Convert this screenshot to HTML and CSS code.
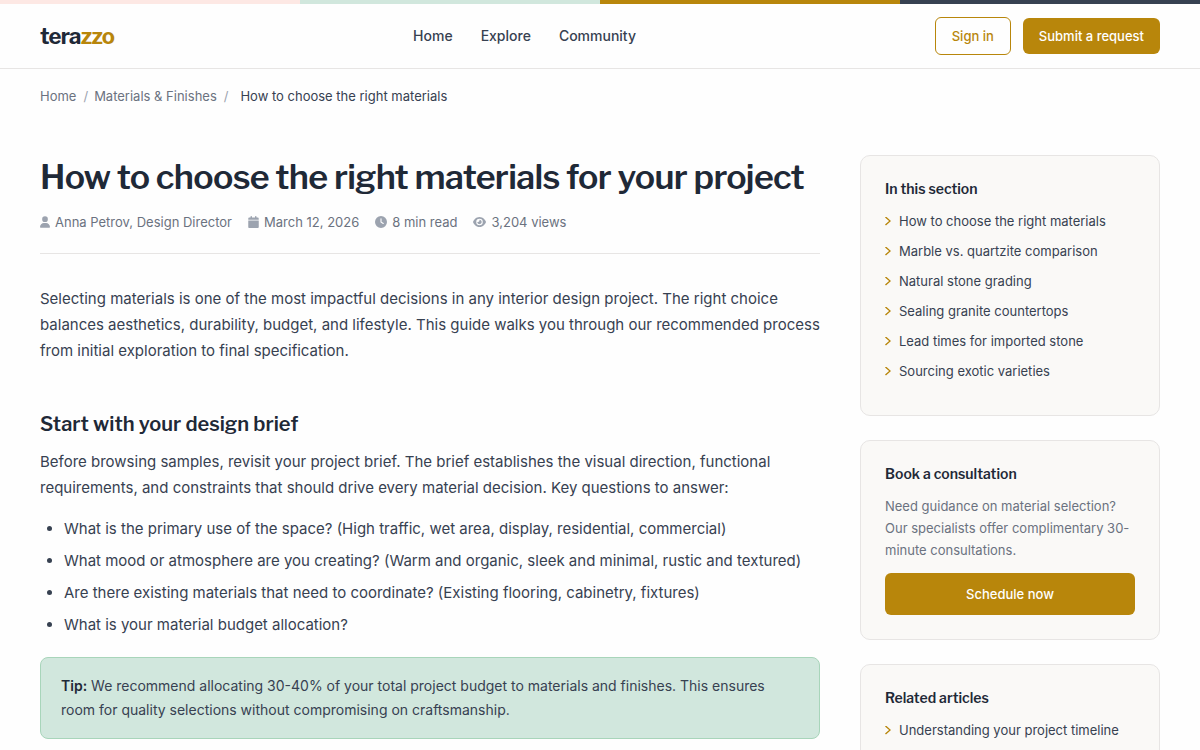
FILE: index.html
```html
<!doctype html>
<html lang="en">
<head>
  <meta charset="utf-8">
  <meta name="viewport" content="width=device-width, initial-scale=1">
  <title>How to choose the right materials for your project</title>
  <link rel="stylesheet" href="styles.css">
</head>
<body>
  <div class="stripe">
    <span class="blush"></span>
    <span class="mint"></span>
    <span class="gold"></span>
    <span class="slate"></span>
  </div>

  <header class="header">
    <a class="logo" href="#">tera<span>zzo</span></a>
    <nav class="nav">
      <a href="#">Home</a>
      <a href="#">Explore</a>
      <a href="#">Community</a>
    </nav>
    <div class="actions">
      <button class="btn btn-outline" type="button">Sign in</button>
      <button class="btn btn-primary" type="button">Submit a request</button>
    </div>
  </header>

  <nav aria-label="Breadcrumb">
    <ol class="breadcrumbs">
      <li><a href="#">Home</a></li>
      <li><a href="#">Materials &amp; Finishes</a></li>
      <li class="current">How to choose the right materials</li>
    </ol>
  </nav>

  <div class="layout">
    <main class="article">
      <h1>How to choose the right materials for your project</h1>
      <div class="meta">
        <span>
          <svg width="10" height="12" viewBox="0 0 448 512"><path d="M224 256a128 128 0 1 0 0-256 128 128 0 1 0 0 256zm-46 48C80 304 0 384 0 482c0 17 13 30 30 30h388c17 0 30-13 30-30 0-98-80-178-178-178z"/></svg>
          Anna Petrov, Design Director
        </span>
        <span>
          <svg width="11" height="12" viewBox="0 0 448 512"><path d="M96 32v32H48C22 64 0 86 0 112v48h448v-48c0-26-22-48-48-48h-48V32c0-18-14-32-32-32s-32 14-32 32v32H160V32c0-18-14-32-32-32S96 14 96 32zm352 160H0v272c0 26 22 48 48 48h352c26 0 48-22 48-48z"/></svg>
          March 12, 2026
        </span>
        <span>
          <svg width="12" height="12" viewBox="0 0 512 512"><path d="M256 0a256 256 0 1 1 0 512 256 256 0 1 1 0-512zm-24 120v136c0 8 4 15 11 20l96 64c11 7 26 4 33-7s4-26-6-33l-86-57V120c0-13-11-24-24-24s-24 11-24 24z"/></svg>
          8 min read
        </span>
        <span>
          <svg width="13" height="12" viewBox="0 0 576 512"><path d="M288 32c-81 0-146 37-193 80C49 156 18 208 3 244c-3 8-3 17 0 25 15 35 46 87 92 131 47 43 112 80 193 80s146-37 193-80c47-44 78-96 93-131 3-8 3-17 0-25-15-36-46-88-93-132-47-43-112-80-193-80zM144 256a144 144 0 1 1 288 0 144 144 0 1 1-288 0zm144-64c0 35-29 64-64 64-7 0-14-1-20-3-6-2-12 2-12 7 0 7 1 14 3 21 14 51 67 82 118 68s82-67 68-118c-11-42-48-69-89-71-5 0-9 5-7 11 2 7 3 14 3 21z"/></svg>
          3,204 views
        </span>
      </div>

      <p>Selecting materials is one of the most impactful decisions in any interior design project. The right choice balances aesthetics, durability, budget, and lifestyle. This guide walks you through our recommended process from initial exploration to final specification.</p>

      <h2>Start with your design brief</h2>
      <p>Before browsing samples, revisit your project brief. The brief establishes the visual direction, functional requirements, and constraints that should drive every material decision. Key questions to answer:</p>
      <ul>
        <li>What is the primary use of the space? (High traffic, wet area, display, residential, commercial)</li>
        <li>What mood or atmosphere are you creating? (Warm and organic, sleek and minimal, rustic and textured)</li>
        <li>Are there existing materials that need to coordinate? (Existing flooring, cabinetry, fixtures)</li>
        <li>What is your material budget allocation?</li>
      </ul>
      <div class="tip"><strong>Tip:</strong> We recommend allocating 30-40% of your total project budget to materials and finishes. This ensures room for quality selections without compromising on craftsmanship.</div>
    </main>

    <aside class="sidebar">
      <section class="card">
        <h3>In this section</h3>
        <ul class="links">
          <li><a href="#">How to choose the right materials</a></li>
          <li><a href="#">Marble vs. quartzite comparison</a></li>
          <li><a href="#">Natural stone grading</a></li>
          <li><a href="#">Sealing granite countertops</a></li>
          <li><a href="#">Lead times for imported stone</a></li>
          <li><a href="#">Sourcing exotic varieties</a></li>
        </ul>
      </section>
      <section class="card">
        <h3>Book a consultation</h3>
        <p>Need guidance on material selection? Our specialists offer complimentary 30-minute consultations.</p>
        <button class="btn btn-primary btn-block" type="button">Schedule now</button>
      </section>
      <section class="card">
        <h3>Related articles</h3>
        <ul class="links">
          <li><a href="#">Understanding your project timeline</a></li>
        </ul>
      </section>
    </aside>
  </div>
</body>
</html>
```
FILE: styles.css
```css
:root {
  --gold: #b8860b;
  --mint: #d1e7dd;
  --blush: #fde8e4;
  --slate: #374151;
  --ink: #1f2937;
  --muted: #6b7280;
  --faint: #9ca3af;
  --line: #e7e5e4;
  --panel: #faf9f7;
  --heading: "Libre Franklin", Inter, sans-serif;
}

* {
  box-sizing: border-box;
}

body {
  margin: 0;
  background: #fefefe;
  color: var(--slate);
  font: 15px/26px Inter, sans-serif;
}

a {
  color: inherit;
  text-decoration: none;
}

h1, h2, h3 {
  margin: 0;
  color: var(--ink);
  font-family: var(--heading);
  font-weight: 600;
}

/* top colour stripe */
.stripe {
  display: flex;
  height: 4px;
}
.stripe span {
  flex: 1;
}
.blush { background: var(--blush); }
.mint { background: var(--mint); }
.gold { background: var(--gold); }
.slate { background: var(--slate); }

.header {
  display: flex;
  align-items: center;
  justify-content: space-between;
  height: 65px;
  padding: 0 40px;
  border-bottom: 1px solid var(--line);
}
.logo {
  color: var(--ink);
  font: 700 22px/28px var(--heading);
  letter-spacing: -0.03em;
}
.logo span {
  color: var(--gold);
}
.nav {
  display: flex;
  gap: 28px;
  font-size: 14px;
  font-weight: 500;
}
.actions {
  display: flex;
  align-items: center;
  gap: 12px;
}

.btn {
  padding: 8px 16px;
  border: 0;
  border-radius: 6px;
  font: 500 13px/20px Inter, sans-serif;
  cursor: pointer;
}
.btn-outline {
  border: 1px solid var(--gold);
  background: transparent;
  color: var(--gold);
}
.btn-primary {
  background: var(--gold);
  color: #fff;
}
.btn-block {
  width: 100%;
  padding: 11px 16px;
}

.breadcrumbs {
  display: flex;
  margin: 0;
  padding: 16px 40px;
  list-style: none;
  color: var(--muted);
  font-size: 13px;
  line-height: 22px;
}
.breadcrumbs li:not(:last-child)::after {
  content: "/";
  margin: 0 6px 0 7px;
  color: var(--faint);
}
.breadcrumbs .current {
  margin-left: 6px;
  color: var(--slate);
}

.layout {
  display: grid;
  grid-template-columns: minmax(0, 1fr) 300px;
  gap: 40px;
  padding: 32px 40px 60px;
}

.article h1 {
  font-size: 34px;
  line-height: 44px;
  letter-spacing: -0.02em;
}
.meta {
  display: flex;
  gap: 16px;
  margin: 12px 0 32px;
  padding-bottom: 20px;
  border-bottom: 1px solid var(--line);
  color: var(--muted);
  font-size: 13px;
  line-height: 22px;
}
.meta span {
  display: flex;
  align-items: center;
  gap: 5px;
}
.meta svg {
  fill: var(--faint);
}
.article p {
  margin: 0 0 15px;
}
.article h2 {
  margin: 45px 0 10px;
  font-size: 20px;
  line-height: 30px;
}
.article ul {
  margin: 0 0 19px;
  padding-left: 24px;
}
.article li + li {
  margin-top: 6px;
}
.tip {
  padding: 16px 20px;
  border: 1px solid #a8d5ba;
  border-radius: 8px;
  background: var(--mint);
  font-size: 14px;
  line-height: 24px;
}
.tip strong {
  color: var(--ink);
  font-weight: 600;
}

.sidebar {
  display: flex;
  flex-direction: column;
  gap: 24px;
}
.card {
  padding: 24px;
  border: 1px solid var(--line);
  border-radius: 10px;
  background: var(--panel);
  font-size: 13px;
  line-height: 22px;
}
.card h3 {
  margin-bottom: 12px;
  font-size: 14px;
  line-height: 18px;
}
.card p {
  margin: 0 0 12px;
  color: var(--muted);
}
.links {
  margin: 0;
  padding: 0 0 1px;
  list-style: none;
}
.links li {
  display: flex;
  align-items: center;
  gap: 8px;
  margin-bottom: 8px;
}
/* chevron */
.links li::before {
  content: "";
  width: 6px;
  height: 9px;
  background: var(--gold);
  clip-path: polygon(0 10%, 16% 0, 100% 50%, 16% 100%, 0 90%, 68% 50%);
}
```
